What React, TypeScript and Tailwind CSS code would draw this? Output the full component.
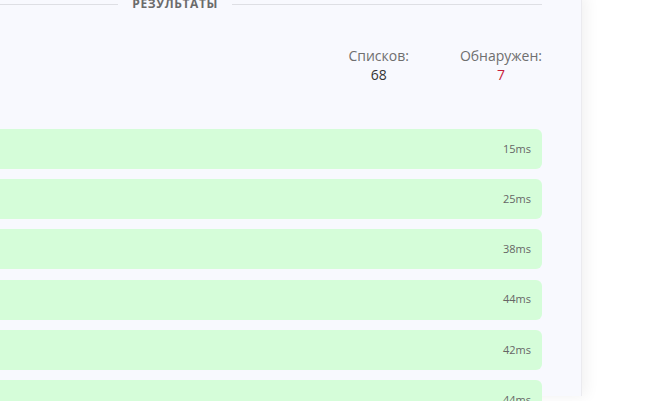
import React from "react";

const times = ["15ms", "25ms", "38ms", "44ms", "42ms", "44ms"];

export default function App() {
  return (
    <div
      className="h-[401px] w-[657px] overflow-hidden bg-white"
      style={{ fontFamily: '"Open Sans", sans-serif' }}
    >
      <div className="relative h-full w-[582px] border-r border-[#ebebef] bg-[#f8f9fe] shadow-[4px_0_14px_rgba(0,0,0,0.06)]">
        <div className="-ml-4 pr-[39px]">
          <div className="-mt-[5px] flex items-center">
            <div className="h-px flex-1 bg-[#dedfe4]" />
            <div className="px-[14px] text-[12px] font-bold leading-[18px] tracking-[0.05em] text-[#6b6b6b]">
              РЕЗУЛЬТАТЫ
            </div>
            <div className="h-px w-[310px] bg-[#dedfe4]" />
          </div>
          <div className="mt-[33px] flex justify-end gap-[51px]">
            <div className="flex flex-col items-center text-[14px] leading-[19px]">
              <span className="text-[#6f6f6f]">Списков:</span>
              <span className="text-[#333]">68</span>
            </div>
            <div className="flex flex-col items-center text-[14px] leading-[19px]">
              <span className="text-[#6f6f6f]">Обнаружен:</span>
              <span className="text-[#c81e3c]">7</span>
            </div>
          </div>
          <div className="mt-[45px] flex flex-col gap-[10.2px]">
            {times.map((t, i) => (
              <div
                key={i}
                className="flex h-[40px] items-center justify-end rounded-[6px] bg-[#d5fdd9] pr-[11px] text-[11px] text-[#666]"
              >
                {t}
              </div>
            ))}
          </div>
        </div>
      </div>
    </div>
  );
}
